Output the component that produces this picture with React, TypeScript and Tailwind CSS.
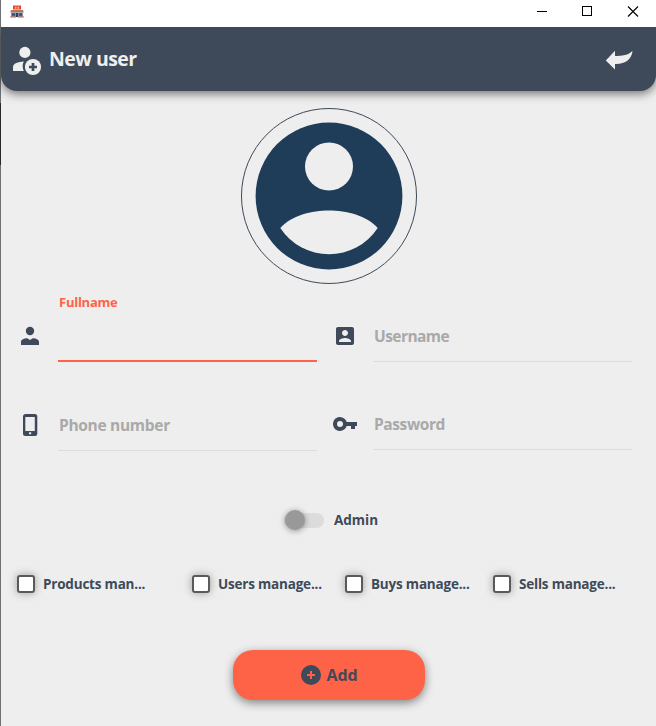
import React from "react";

const font = "font-['Open_Sans','Noto_Sans',sans-serif] font-bold whitespace-nowrap";

function StoreIcon() {
  return (
    <svg className="ml-[9px] mt-[5px]" width="14" height="14" viewBox="0 0 14 14">
      <path d="M3 .5h8v4H3z" fill="#e9482b" />
      <path d="M5 1.8h1.4v2H5zM7.6 1.8H9v2H7.6z" fill="#f8b49e" />
      <path d="M1 5h12l.8 2.5H.2z" fill="#b9745f" />
      <path d="M1 7.5h12v4H1z" fill="#8b8f9a" />
      <path d="M2 8.2h3v2.5H2zM9 8.2h3v2.5H9z" fill="#35557c" />
      <path d="M6 8h2v4H6z" fill="#263f62" />
      <path d="M.3 11.3H6v1.2H.3zM8 11.3h5.7v1.2H8z" fill="#a06a5c" />
    </svg>
  );
}

function TitleBar() {
  return (
    <div className="relative z-10 flex h-[27px] shrink-0 items-start justify-between bg-white">
      <StoreIcon />
      <svg width="119" height="22" viewBox="537 0 119 22" fill="none" stroke="#000" shapeRendering="crispEdges">
        <path d="M537 11.5h10" />
        <path d="M582.5 6.5h9v9h-9z" />
        <path d="M628 6.5l10 10M638 6.5l-10 10" shapeRendering="auto" strokeWidth="1.1" />
      </svg>
    </div>
  );
}

function Header() {
  return (
    <header className="flex h-16 items-center rounded-b-[16px] bg-[#3e4a59] shadow-[0_3px_10px_rgba(0,0,0,0.5)]">
      <svg className="ml-3 mt-1" width="30" height="30" viewBox="13 46 30 30">
        <circle cx="24.9" cy="52.4" r="5.6" fill="#eee" />
        <path d="M13 71v-4.3c0-3.2 5.2-5.1 10.8-5.3a10.6 10.6 0 0 0 .1 9.6z" fill="#eee" />
        <circle cx="33" cy="67" r="8.1" fill="#eee" />
        <path d="M33 63v8M29 67h8" stroke="#3e4a59" strokeWidth="2.7" />
      </svg>
      <h1 className={`${font} ml-[6px] text-[19.5px] leading-[28px] tracking-[-0.55px] text-[#eee]`}>New user</h1>
      <svg className="ml-auto mr-[23px] mt-1" width="28" height="22" viewBox="605 50 28 22">
        <path d="M605.8 60.5 615 50.8v5.200c7 0 13.500-.5 17.500-5.200-.7 8.500-7 13.400-17.500 13.100v5.700z" fill="#eee" />
      </svg>
    </header>
  );
}

function Avatar() {
  return (
    <div className="mx-auto mt-[17px] flex size-[176px] items-center justify-center rounded-full border border-[#3e4a59]">
      <svg width="148" height="148" viewBox="255 122 148 148">
        <circle cx="329" cy="196" r="73.4" fill="#1f3d59" />
        <circle cx="329" cy="166.5" r="24" fill="#eee" />
        <path d="M280.3 228C291 215.500 312 210.500 329 210.500S367 215.500 377.700 228A58.300 58.300 0 0 1 280.300 228z" fill="#eee" />
      </svg>
    </div>
  );
}

function PersonIcon() {
  return (
    <svg width="24" height="24" viewBox="18 324 24 24" fill="#3e4a59">
      <circle cx="30" cy="331" r="4.2" />
      <path d="M21 345v-3.200c0-2.200 3.200-3.600 6.200-3.600l2.800 1.700 2.800-1.700c3 0 6.200 1.400 6.200 3.600v3.200z" />
    </svg>
  );
}

function AccountBoxIcon() {
  return (
    <svg width="24" height="24" viewBox="0 0 24 24" fill="#3e4a59">
      <path d="M3 5v14c0 1.100.89 2 2 2h14c1.100 0 2-.9 2-2V5c0-1.100-.9-2-2-2H5c-1.110 0-2 .9-2 2zm12 4c0 1.660-1.340 3-3 3s-3-1.340-3-3 1.340-3 3-3 3 1.340 3 3zm-9 8c0-2 4-3.100 6-3.100s6 1.100 6 3.100v1H6v-1z" />
    </svg>
  );
}

function PhoneIcon() {
  return (
    <svg width="24" height="24" viewBox="18 413 24 24">
      <rect x="23" y="414" width="14.300" height="22" rx="2.500" fill="#3e4a59" />
      <path d="M25.300 417h9.500v14h-9.500z" fill="#eee" />
      <rect x="29" y="432.200" width="2.200" height="2" rx=".5" fill="#eee" />
    </svg>
  );
}

function KeyIcon() {
  return (
    <svg width="24" height="24" viewBox="333 412 24 24" fill="#3e4a59" fillRule="evenodd">
      <path d="M346.700 422H357v4h-2v3h-4v-3h-4.300a7 7 0 1 1 0-4zM340 421a3 3 0 1 0 0 6 3 3 0 0 0 0-6z" />
    </svg>
  );
}

function Field({ icon, label, active = false, tracking }: { icon: React.ReactNode; label: string; active?: boolean; tracking: string }) {
  return (
    <div className="flex w-[299px]">
      <div className="mt-[32px] h-6 w-10 shrink-0">{icon}</div>
      <div className={`h-[70px] w-[259px] ${active ? "border-b-2 border-[#ff6347]" : "border-b border-[#dcdcdc]"}`}>
        {active ? (
          <div className={`${font} pl-px text-[13px] leading-[20px] text-[#ff6347] ${tracking}`}>{label}</div>
        ) : (
          <div className={`${font} pl-px pt-[32px] text-[15.5px] leading-[24px] text-[#a9a9a9] ${tracking}`}>{label}</div>
        )}
      </div>
    </div>
  );
}

function Check({ label, width }: { label: string; width: string }) {
  return (
    <div className={`flex items-center ${width}`}>
      <span className="size-[18px] shrink-0 rounded-[3px] border-2 border-[#5a5a5a] bg-white shadow-[0_0_8px_rgba(0,0,0,0.35)]" />
      <span className={`${font} ml-2 text-[13.5px] leading-5 tracking-[-0.2px] text-[#3e4a59]`}>{label}</span>
    </div>
  );
}

export default function App() {
  return (
    <div className="flex h-[726px] w-[656px] overflow-hidden bg-[#eee]">
      <div className="flex w-px shrink-0 flex-col bg-[#6f7072]">
        <div className="mt-[103px] h-[62px] bg-[#29292b]" />
      </div>
      <main className="flex w-[655px] flex-col">
        <TitleBar />
        <Header />
        <Avatar />
        <section className="mt-2 flex gap-4 pl-[17px]">
          <Field icon={<PersonIcon />} label="Fullname" active tracking="tracking-[-0.25px]" />
          <Field icon={<AccountBoxIcon />} label="Username" tracking="tracking-[-0.55px]" />
        </section>
        <section className="mt-[19px] flex gap-4 pl-[17px]">
          <Field icon={<PhoneIcon />} label="Phone number" tracking="tracking-[-0.3px]" />
          <div className="-mt-px">
            <Field icon={<KeyIcon />} label="Password" tracking="tracking-[-0.4px]" />
          </div>
        </section>
        <div className="mt-[58px] flex h-[22px] items-center pl-[283px]">
          <div className="flex h-[15px] w-10 items-center rounded-full bg-[#dcdcdc]">
            <span className="ml-[0.5px] size-5 rounded-full bg-[#999] shadow-[0_1px_6px_rgba(0,0,0,0.4)]" />
          </div>
          <span className={`${font} ml-[10px] text-[13.5px] leading-5 tracking-[0px] text-[#3e4a59]`}>Admin</span>
        </div>
        <div className="mt-[43px] flex h-5 items-center pl-4">
          <Check label="Products man..." width="w-[175px]" />
          <Check label="Users manage..." width="w-[153px]" />
          <Check label="Buys manage..." width="w-[148px]" />
          <Check label="Sells manage..." width="w-[140px]" />
        </div>
        <button className="ml-[232px] mt-[56px] flex h-[50px] w-[192px] items-center justify-center rounded-[20px] bg-[#ff6347] shadow-[0_3px_10px_rgba(0,0,0,0.45)]">
          <svg width="20" height="20" viewBox="0 0 20 20">
            <circle cx="10" cy="10" r="10" fill="#3e4a59" />
            <path d="M10 6v8M6 10h8" stroke="#ff6347" strokeWidth="2" />
          </svg>
          <span className={`${font} ml-[6px] text-[16px] leading-6 tracking-[-0.1px] text-[#3e4a59]`}>Add</span>
        </button>
      </main>
    </div>
  );
}
